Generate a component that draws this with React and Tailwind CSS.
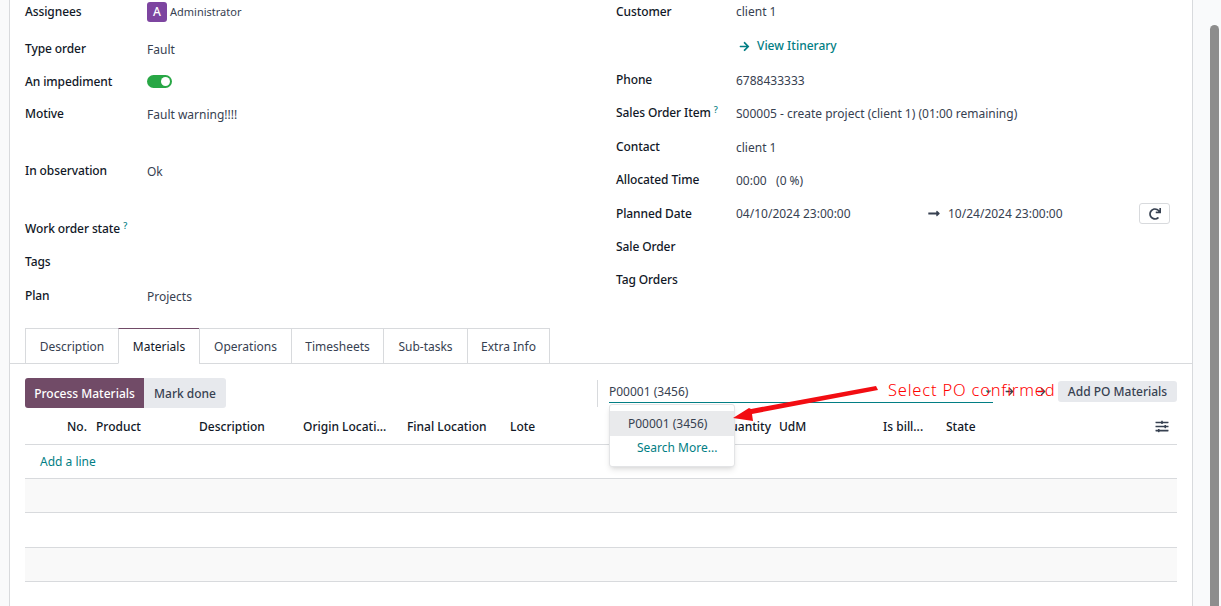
import React from "react";
import { FaRedo, FaSlidersH, FaLongArrowAltRight, FaArrowRight, FaCaretDown } from "react-icons/fa";

const Label = ({ label, help }) => (
  <>
    {label}
    {help && <sup className="ml-[3px] text-[9px] font-medium text-[#017e84]">?</sup>}
  </>
);

const Row = ({ h, label, help, children }) => (
  <div className={`flex ${h}`}>
    <div className="w-[122px] shrink-0 h-[22px] leading-[22px] font-medium tracking-[-0.1px] text-[#111827] whitespace-nowrap">
      <Label label={label} help={help} />
    </div>
    <div className="h-[22px] leading-[24px] text-[#374151] whitespace-nowrap">{children}</div>
  </div>
);

const RowR = ({ h, label, help, children, lead = "leading-[24px]" }) => (
  <div className={`flex ${h}`}>
    <div className="w-[120px] shrink-0 h-[22px] leading-[22px] font-medium tracking-[-0.1px] text-[#111827] whitespace-nowrap">
      <Label label={label} help={help} />
    </div>
    <div className={`flex-1 h-[22px] ${lead} text-[#374151] whitespace-nowrap`}>{children}</div>
  </div>
);

const tabs = [
  ["Description", "w-[94px]"],
  ["Materials", "w-[82px]"],
  ["Operations", "w-[93px]"],
  ["Timesheets", "w-[93px]"],
  ["Sub-tasks", "w-[85px]"],
  ["Extra Info", "w-[83px]"],
];

const cols = [
  ["No.", "w-[29px]"],
  ["Product", "w-[103px]"],
  ["Description", "w-[104px]"],
  ["Origin Locati...", "w-[104px]"],
  ["Final Location", "w-[103px]"],
  ["Lote", "w-[203px]"],
  ["Quantity", "w-[66px] pr-[8px] text-right"],
  ["UdM", "w-[104px]"],
  ["Is bill...", "w-[63px]"],
  ["State", "w-[100px]"],
];

export default function App() {
  return (
    <div className="relative flex h-[606px] w-[1221px] overflow-hidden bg-[#f9fafb] text-[12px] [font-family:'Noto_Sans',sans-serif]">
      <div className="w-[9px] shrink-0" />
      <main className="w-[1184px] shrink-0 border-x border-[#d8dadd] bg-white">
        <section className="flex h-[328px] pt-px">
          <div className="ml-[15px] w-[591px]">
            <Row h="h-[37px]" label="Assignees">
              <span className="flex items-center gap-[3px] text-[11px] leading-[22px]">
                <span className="flex h-5 w-5 items-center justify-center rounded-[3px] bg-[#7d45a0] text-[12px] font-medium text-white">A</span>
                <span>Administrator</span>
              </span>
            </Row>
            <Row h="h-[33px]" label="Type order">Fault</Row>
            <Row h="h-[32px]" label="An impediment">
              <span className="flex h-[20px] items-center">
                <span className="flex h-[13px] w-[25px] items-center justify-end rounded-full bg-[#28a745] pr-[2px]">
                  <span className="h-[9px] w-[9px] rounded-full bg-white" />
                </span>
              </span>
            </Row>
            <Row h="h-[57px]" label="Motive">Fault warning!!!!</Row>
            <Row h="h-[58px]" label="In observation">Ok</Row>
            <Row h="h-[33px]" label="Work order state" help />
            <Row h="h-[34px]" label="Tags" />
            <Row h="h-[22px]" label="Plan">Projects</Row>
          </div>
          <div className="w-[554px]">
            <RowR h="h-[34px]" label="Customer" lead="leading-[22px]">client 1</RowR>
            <RowR h="h-[34px]" label="">
              <span className="flex h-[22px] items-center gap-[7px] pl-[3px] font-medium text-[#017e84]">
                <FaArrowRight className="h-[11px] w-[11px]" />
                View Itinerary
              </span>
            </RowR>
            <RowR h="h-[33px]" label="Phone">6788433333</RowR>
            <RowR h="h-[34px]" label="Sales Order Item" help>S00005 - create project (client 1) (01:00 remaining)</RowR>
            <RowR h="h-[33px]" label="Contact">client 1</RowR>
            <RowR h="h-[34px]" label="Allocated Time">00:00 &nbsp;&nbsp;(0 %)</RowR>
            <RowR h="h-[33px]" label="Planned Date" lead="leading-[22px]">
              <div className="flex h-[21px] items-center">
                <span className="w-[191px]">04/10/2024 23:00:00</span>
                <FaLongArrowAltRight className="h-[13px] w-[14px] text-[#374151]" />
                <span className="ml-[7px] w-[191px]">10/24/2024 23:00:00</span>
                <span className="flex h-[21px] w-[31px] items-center justify-center rounded-[3px] border border-[#d8dadd] bg-white">
                  <FaRedo className="h-[12px] w-[12px] text-[#374151]" />
                </span>
              </div>
            </RowR>
            <RowR h="h-[33px]" label="Sale Order" />
            <RowR h="h-[22px]" label="Tag Orders" />
          </div>
        </section>

        <nav className="flex h-[36px] border-b border-[#d8dadd] pl-[15px]">
          {tabs.map(([t, w], i) => (
            <div
              key={t}
              className={`flex h-[36px] ${w} -mr-px items-center justify-center border pt-px border-[#d8dadd] ${
                i === 1
                  ? "border-t-[#714b67] border-b-white bg-white text-[#111827]"
                  : "border-b-0 text-[#374151]"
              }`}
            >
              {t}
            </div>
          ))}
        </nav>

        <section className="px-[15px]">
          <div className="flex h-[50px] items-start pt-[14px]">
            <button className="flex h-[30px] w-[119px] items-center justify-center rounded-l-[3px] bg-[#714b67] pt-px font-medium text-white">Process Materials</button>
            <button className="flex h-[30px] w-[82px] items-center justify-center rounded-r-[3px] bg-[#e7e9ed] pt-px font-medium text-[#374151]">Mark done</button>
            <div className="ml-[371px] mt-[2px] h-[27px] w-px bg-[#d8dadd]" />
            <div className="ml-[11px] mt-[2px] flex h-[23px] w-[384px] items-center justify-between border-b border-[#017e84] pt-px text-[#374151]">
              <span>P00001 (3456)</span>
              <FaCaretDown className="h-[9px] w-[9px] text-[#017e84]" />
            </div>
            <div className="mt-[3px] flex h-[20px] items-center gap-[23px] pl-[12px] text-[#374151]">
              <FaArrowRight className="h-[9px] w-[9px]" />
              <FaArrowRight className="h-[9px] w-[9px]" />
            </div>
            <button className="ml-auto mt-[3px] flex h-[21px] w-[119px] items-center justify-center rounded-[3px] bg-[#e7e9ed] font-medium text-[#374151]">Add PO Materials</button>
          </div>

          <div className="flex h-[31px] items-center border-b border-[#d8dadd] pb-[4px] pl-[42px] font-medium text-[#111827]">
            {cols.map(([c, w]) => (
              <div key={c} className={`${w} shrink-0 whitespace-nowrap`}>{c}</div>
            ))}
            <FaSlidersH className="ml-auto mr-[8px] mb-[2px] h-[13px] w-[14px] text-[#374151]" />
          </div>
          <div className="flex h-[34px] items-center border-b border-[#d8dadd] pl-[15px] pt-px text-[#017e84]">Add a line</div>
          <div className="h-[34px] border-b border-[#d8dadd] bg-[#f9f9f9]" />
          <div className="h-[35px] border-b border-[#d8dadd] bg-white" />
          <div className="h-[34px] border-b border-[#d8dadd] bg-[#f9f9f9]" />
        </section>
      </main>

      <div className="relative flex-1">
        <div className="absolute left-[17px] top-[25px] h-[581px] w-[9px] rounded-t-full bg-[#8d8d8d]" />
      </div>

      <div className="absolute left-[609px] top-[404px] flex h-[63px] w-[126px] flex-col rounded-[3px] border border-[#e3e4e6] bg-white pt-[6px] shadow-md">
        <div className="flex h-[25px] items-center bg-[#e9eaec] pl-[18px] text-[#374151]">P00001 (3456)</div>
        <div className="flex h-[24px] items-center pl-[27px] text-[#017e84]">Search More...</div>
      </div>

      <svg className="absolute left-0 top-0 pointer-events-none" width="1221" height="606" viewBox="0 0 1221 606">
        <polygon points="876,386 878,390 752,414 753,421 733,418 749,408 751,409" fill="#f20d12" />
      </svg>
      <div className="absolute left-[888px] top-[378px] text-[16.5px] font-light leading-[24px] tracking-[0.8px] text-[#ff0000] whitespace-nowrap">Select PO confirmed</div>
    </div>
  );
}
